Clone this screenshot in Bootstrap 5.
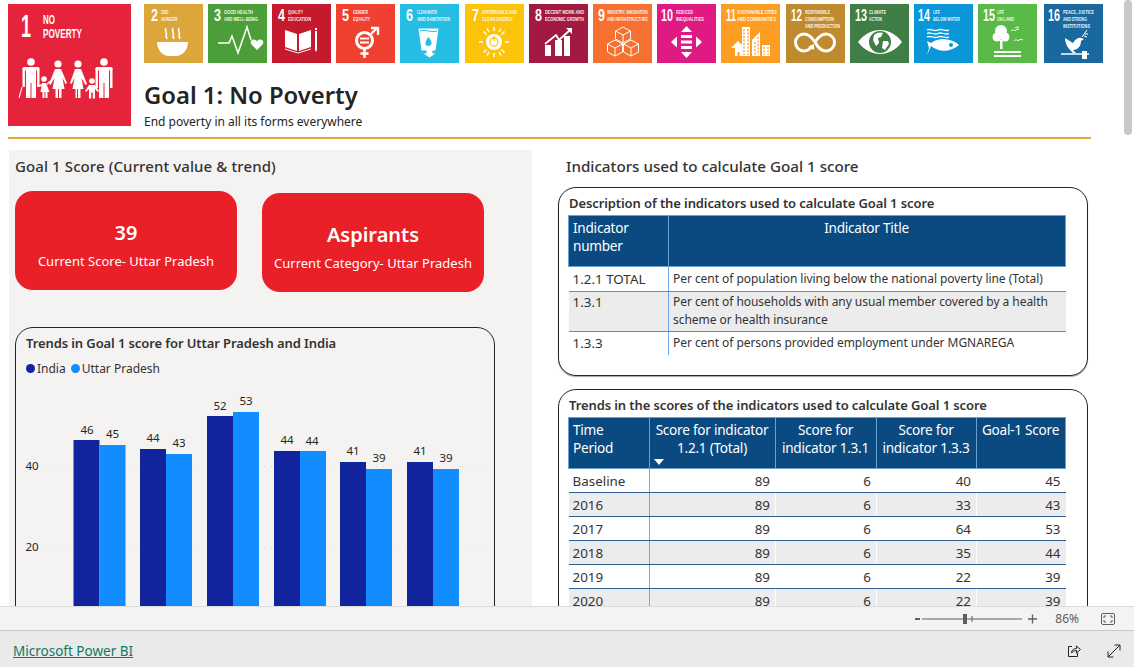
<!DOCTYPE html>
<html lang="en">

<head>
  <meta charset="UTF-8">
  <meta name="viewport" content="width=device-width, initial-scale=1.0">
  <title>Goal 1: No Poverty</title>
  <link href="https://cdn.jsdelivr.net/npm/bootstrap@5.3.2/dist/css/bootstrap.min.css" rel="stylesheet">
  <script src="https://cdn.jsdelivr.net/npm/bootstrap@5.3.2/dist/js/bootstrap.bundle.min.js"></script>
  <style>
    html, body { height: 667px; overflow: hidden; }
    body { font-family: "Noto Sans", "Liberation Sans", sans-serif; color: #252423; background: #fff; }
    .report-canvas { height: 606px; overflow: hidden; position: relative; padding: 4px 0 0 8px; }
    .page-scroll { position: absolute; left: 1124px; top: 0; width: 8px; height: 135px; background: #c8c8c8; border-radius: 4px; }

    .head-block { width: 1083px; height: 135px; border-bottom: 2px solid #e2a93f; }
    .goal-big { width: 123px; height: 122px; margin-right: 13px; flex: none; }
    .tile-row { height: 59px; }
    .tile { width: 59px; height: 59px; flex: none; margin-right: 5px; display: block; }
    .tile-gap { margin-right: 6px; }
    .tile-gap-wide { margin-right: 7px; }
    .sdg-num { font-family: "Liberation Sans Narrow", "Liberation Sans", sans-serif; font-weight: 700; fill: #fff; }
    .sdg-lbl { font-family: "Liberation Sans Narrow", "Liberation Sans", sans-serif; font-weight: 700; fill: #fff; font-size: 5.6px; opacity: .92; }
    .goal-title { font-size: 23.8px; font-weight: 600; line-height: 34px; margin: 15px 0 0; color: #252423; }
    .goal-sub { font-size: 12px; line-height: 16px; margin: 2px 0 0; color: #252423; }

    .body-cols { margin: 11px 0 0 1px; gap: 26px; }
    .score-panel { width: 523px; height: 600px; background: #f5f2f2; padding: 6px 0 0 6px; flex: none; }
    .panel-head { font-size: 15px; font-weight: 500; line-height: 20px; margin: 0; color: #333; letter-spacing: .1px; }
    .score-tile { width: 222px; height: 99px; border-radius: 18px; background: #e92027; color: #fff; padding-top: 7px; }
    .score-tile-low { margin-top: 2px; }
    .score-value { font-size: 20px; font-weight: 600; line-height: 28px; }
    .score-label { font-size: 13px; line-height: 18px; margin-top: 5px; }
    .tile-pair { margin-top: 15px; gap: 25px; align-items: flex-start; }
    .trend-box { width: 480px; height: 400px; margin-top: 35px; border: 1px solid #252423; border-radius: 18px; padding: 5px 0 0 10px; }
    .box-head { font-size: 13px; font-weight: 600; line-height: 20px; margin: 0; color: #333; letter-spacing: -.1px; }
    .legend-row { font-size: 12px; line-height: 18px; margin-top: 7px; gap: 5px; color: #333; }
    .legend-dot { width: 9px; height: 9px; border-radius: 50%; display: inline-block; margin-right: 2px; }
    .dot-india { background: #12239e; }
    .dot-state { background: #118dff; }
    .trend-svg { display: block; margin: 7px 0 0 -10px; }
    .trend-svg text { font-family: "Noto Sans", sans-serif; font-size: 11.5px; fill: #252423; letter-spacing: -.2px; }

    .indicator-col { width: 530px; flex: none; }
    .indicator-head { font-size: 15.2px; line-height: 20px; margin: 6px 0 0 8px; font-weight: 500; color: #333; }
    .table-box { border: 1px solid #252423; border-radius: 18px; padding: 5px 21px 0 9px; background: #fff; }
    .table-box .box-head { margin-left: 1px; }
    .desc-box { height: 189px; margin-top: 11px; box-shadow: 0 1px 1px rgba(0,0,0,.35); }
    .trend-table-box { height: 300px; margin-top: 13px; }
    .sdg-table { table-layout: fixed; margin: 2px 0 0; font-size: 13.4px; line-height: 18px; color: #333; }
    .sdg-table>:not(caption)>*>* { padding: 2px 5px 3px 4px; border: 0; box-shadow: none; background: transparent; color: inherit; }
    .sdg-table>thead>tr>th { background: #0a4a80; color: #fff; font-weight: 400; font-size: 13.6px; letter-spacing: -.25px; padding-top: 3px; vertical-align: top; border: 1px solid #6a9fd0; border-left-width: 0; height: 51px; }
    .sdg-table>thead>tr>th:first-child { border-left-width: 1px; }
    .sdg-table>tbody>tr>td { border-bottom: 1px solid #5f8fc0; }
    .sdg-table>tbody>tr:last-child>td { border-bottom: 0; }
    .sdg-table>tbody>tr>td:first-child { border-right: 1px solid #6aa9e9; }
    .sdg-table>tbody>tr:nth-child(even)>td { background: #ececec; }
    .desc-table>tbody>tr>td+td { font-size: 12px; letter-spacing: -.05px; }
    .desc-table>tbody>tr:nth-child(1)>td { padding-top: 3px; }
    .desc-table>tbody>tr:nth-child(2)>td { padding-top: 1px; padding-bottom: 2px; }
    .score-table>tbody>tr>td { height: 24px; padding-top: 3px; padding-bottom: 2px; border-bottom-color: #2d5f92; }
    .score-table>tbody>tr>td+td { border-left: 1px solid #fff; text-align: right; }
    .sort-mark { display: block; width: 0; height: 0; border: 5px solid transparent; border-top: 6px solid #fff; border-bottom: 0; margin: 2px 0 0 0; }

    .zoom-strip { height: 25px; background: #f3f3f3; border-top: 1px solid #dcdcdc; border-bottom: 1px solid #c8c8c8; padding-right: 19px; font-size: 12px; color: #605e5c; }
    .zoom-pct { margin: 0 22px 0 18px; }
    .foot-strip { height: 36px; background: #eaeaea; padding: 3px 13px 0; }
    .foot-link { color: #117865; font-size: 13.5px; padding-top: 1px; }
    .foot-tool { gap: 26px; }
  </style>
</head>

<body>
  <main class="report-canvas">
    <div class="page-scroll"></div>

    <div class="head-block d-flex">
      <svg class="goal-big" viewBox="0 0 123 122">
        <rect width="123" height="122" fill="#e5243b" />
        <text class="sdg-num" x="13" y="33" font-size="32" data-fit="10">1</text>
        <text class="sdg-num" x="35" y="20" font-size="12.5" data-fit="12">NO</text>
        <text class="sdg-num" x="35" y="34" font-size="12.5" data-fit="39">POVERTY</text>
        <g fill="#fff">
          <!-- man with stick -->
          <circle cx="23" cy="58" r="3.800" />
          <rect x="14.500" y="63" width="17" height="3.500" rx="1.700" />
          <rect x="14.500" y="64" width="2.400" height="19" />
          <rect x="29.100" y="64" width="2.400" height="19" />
          <rect x="18" y="64" width="10" height="15" />
          <rect x="18" y="78" width="4.500" height="16" />
          <rect x="23.500" y="78" width="4.500" height="16" />
          <path d="M13.500 83l1 .3-3 10.700-1-.3zM31 81l3 -1 1 1-3.500 2z" />
          <!-- child -->
          <circle cx="36" cy="75" r="2.800" />
          <path d="M34 79h4l3.500 9h-2v6h-2v-6h-1v6h-2v-6h-2z" />
          <path d="M39 79l3-2.500 1 1-4 3.500z" />
          <!-- woman -->
          <circle cx="50" cy="60" r="3.600" />
          <path d="M47 65h6l6 14-1.500 1-3-6 2 11h-3v9h-2.500v-9h-1v9H47.500v-9h-3l2-11-4 7-1.500-1z" />
          <!-- woman -->
          <circle cx="70" cy="60" r="3.600" />
          <path d="M67 65h6l6 15-1.500 1-4-7 2 11h-3v9h-2.500v-9h-1v9H67.500v-9h-3l2-11-3 6-1.500-1z" />
          <!-- child -->
          <circle cx="84" cy="77" r="2.800" />
          <path d="M81 81h6l4 6-1.200 1-2.800-3v9.500h-2.200v-6h-1.600v6H81v-9.500l-2.800 3-1.200-1z" />
          <!-- man -->
          <circle cx="96" cy="58" r="3.800" />
          <rect x="87.500" y="63" width="17" height="3.500" rx="1.700" />
          <rect x="87.500" y="64" width="2.400" height="20" />
          <rect x="102.100" y="64" width="2.400" height="20" />
          <rect x="91" y="64" width="10" height="15" />
          <rect x="91" y="78" width="4.500" height="16" />
          <rect x="96.500" y="78" width="4.500" height="16" />
        </g>
      </svg>

      <div class="flex-grow-1">
        <div class="tile-row d-flex">
          <svg class="tile" viewBox="0 0 59 59">
            <rect width="59" height="59" fill="#dda63a" />
            <text class="sdg-num" x="7" y="17" font-size="16" data-fit="7">2</text>
            <text class="sdg-lbl" x="17" y="10" data-fit="7.500">ZERO</text>
            <text class="sdg-lbl" x="17" y="17" data-fit="16.500">HUNGER</text>
            <path d="M13 38h31c0 7-5 14-12 14h-7c-7 0-12-7-12-14z" fill="#fff" />
            <path d="M22 24c-2 3 2 5 0 8l1 3M29 24c-2 3 2 5 0 8l1 3M35 24c-2 3 2 5 0 8l1 3" fill="none" stroke="#fff" stroke-width="1.600" />
          </svg>
          <svg class="tile" viewBox="0 0 59 59">
            <rect width="59" height="59" fill="#4c9f38" />
            <text class="sdg-num" x="6" y="17" font-size="16" data-fit="7">3</text>
            <text class="sdg-lbl" x="16" y="10" data-fit="29">GOOD HEALTH</text>
            <text class="sdg-lbl" x="16" y="17" data-fit="34">AND WELL-BEING</text>
            <path d="M10 39h11l3-7 6 17 9-26 4 13" fill="none" stroke="#fff" stroke-width="1.500" />
            <path d="M49 46l-5.500-5.500c-3-4 3-7 5.500-3 2.500-4 8.500-1 5.500 3z" fill="#fff" />
          </svg>
          <svg class="tile" viewBox="0 0 59 59">
            <rect width="59" height="59" fill="#c5192d" />
            <text class="sdg-num" x="6" y="17" font-size="16" data-fit="7">4</text>
            <text class="sdg-lbl" x="16" y="10" data-fit="15">QUALITY</text>
            <text class="sdg-lbl" x="16" y="17" data-fit="23">EDUCATION</text>
            <path d="M13 26l12 4v17l-12-4zM39 26l-12 4v17l12-4z" fill="#fff" />
            <path d="M13 45l13 4 13-4" fill="none" stroke="#fff" stroke-width="1" />
            <path d="M43 24h2v2h-2zM43 27h2v19l-1 2-1-2z" fill="#fff" />
          </svg>
          <svg class="tile" viewBox="0 0 59 59">
            <rect width="59" height="59" fill="#f04030" />
            <text class="sdg-num" x="6" y="17" font-size="16" data-fit="7">5</text>
            <text class="sdg-lbl" x="17" y="10" data-fit="15">GENDER</text>
            <text class="sdg-lbl" x="17" y="17" data-fit="17">EQUALITY</text>
            <circle cx="28.500" cy="36.500" r="8" fill="none" stroke="#fff" stroke-width="3" />
            <path d="M24 34.500h9M24 38.500h9" stroke="#fff" stroke-width="2" />
            <path d="M28.500 45v9M24.500 49.500h8M34 31l7-7M35 24h7v7" fill="none" stroke="#fff" stroke-width="2.400" />
          </svg>
          <svg class="tile tile-gap" viewBox="0 0 59 59">
            <rect width="59" height="59" fill="#26bde2" />
            <text class="sdg-num" x="6" y="17" font-size="16" data-fit="7">6</text>
            <text class="sdg-lbl" x="17" y="10" data-fit="20">CLEAN WATER</text>
            <text class="sdg-lbl" x="17" y="17" data-fit="33">AND SANITATION</text>
            <path d="M18.500 24.500h20l-3 22h-3v3h3l-6 4-6-4h3v-3h-5z" fill="#fff" />
            <path d="M20 27c5-2 12 2 17 0" fill="none" stroke="#26bde2" stroke-width="1" />
            <path d="M28.500 33c-5 6-3 9 0 9s5-3 0-9z" fill="#26bde2" />
          </svg>
          <svg class="tile" viewBox="0 0 59 59">
            <rect width="59" height="59" fill="#fcc30b" />
            <text class="sdg-num" x="7" y="17" font-size="16" data-fit="7">7</text>
            <text class="sdg-lbl" x="17" y="10" data-fit="35">AFFORDABLE AND</text>
            <text class="sdg-lbl" x="17" y="17" data-fit="31">CLEAN ENERGY</text>
            <circle cx="29" cy="38" r="8" fill="#fff" />
            <circle cx="29" cy="38" r="4" fill="none" stroke="#fcc30b" stroke-width="1.300" />
            <path d="M29 32v5" stroke="#fcc30b" stroke-width="1.300" />
            <path d="M29 23v4M29 49v4M14 38h4M40 38h4M18.500 27.500l3 3M36.500 45.500l3 3M18.500 48.500l3-3M36.500 30.500l3-3M22 24.500l2 3.500M34 48l2 3.500M36 24.500l-2 3.500M24 48l-2 3.500" stroke="#fff" stroke-width="1.500" />
          </svg>
          <svg class="tile" viewBox="0 0 59 59">
            <rect width="59" height="59" fill="#a21942" />
            <text class="sdg-num" x="6" y="17" font-size="16" data-fit="7">8</text>
            <text class="sdg-lbl" x="16" y="10" data-fit="39">DECENT WORK AND</text>
            <text class="sdg-lbl" x="16" y="17" data-fit="39">ECONOMIC GROWTH</text>
            <path d="M16 41h6v11h-6zM26 36h7v16h-7zM35 32h6v20h-6z" fill="#fff" />
            <path d="M16 40l11-9 3 5 11-10" fill="none" stroke="#fff" stroke-width="1.800" />
            <path d="M37 24h6v6z" fill="#fff" />
          </svg>
          <svg class="tile" viewBox="0 0 59 59">
            <rect width="59" height="59" fill="#f6702f" />
            <text class="sdg-num" x="5" y="17" font-size="16" data-fit="7">9</text>
            <text class="sdg-lbl" x="14" y="10" data-fit="41">INDUSTRY, INNOVATION</text>
            <text class="sdg-lbl" x="14" y="17" data-fit="41">AND INFRASTRUCTURE</text>
            <g fill="none" stroke="#fff" stroke-width="1">
              <path d="M30 23l7.500 4v8l-7.500 4-7.500-4v-8zM22.500 27l7.500 4 7.500-4M30 31v8" />
              <path d="M22 36l7.500 4v8l-7.500 4-7.500-4v-8zM14.500 40l7.500 4 7.500-4M22 44v8" />
              <path d="M38 36l7.500 4v8l-7.500 4-7.500-4v-8zM30.500 40l7.500 4 7.500-4M38 44v8" />
            </g>
          </svg>
          <svg class="tile" viewBox="0 0 59 59">
            <rect width="59" height="59" fill="#e01a83" />
            <text class="sdg-num" x="4" y="17" font-size="16" data-fit="12">10</text>
            <text class="sdg-lbl" x="19" y="10" data-fit="17">REDUCED</text>
            <text class="sdg-lbl" x="19" y="17" data-fit="28">INEQUALITIES</text>
            <path d="M29.500 22l5.500 6h-11zM29.500 54l5.500-6h-11zM14 38l6-5.500v11zM45 38l-6-5.500v11zM24 31h11v3h-11zM24 36.500h11v3h-11zM24 42h11v3h-11z" fill="#fff" />
          </svg>
          <svg class="tile tile-gap" viewBox="0 0 59 59">
            <rect width="59" height="59" fill="#fd9d24" />
            <text class="sdg-num" x="5" y="17" font-size="16" data-fit="10">11</text>
            <text class="sdg-lbl" x="16" y="10" data-fit="40">SUSTAINABLE CITIES</text>
            <text class="sdg-lbl" x="16" y="17" data-fit="39">AND COMMUNITIES</text>
            <path d="M14 52V44h-4l7-7 7 7h-3v8h-2.500v-4h-2v4zM21 23h8v29h-8zM31 52V36l8-8v24zM41 41h8v11h-8z" fill="#fff" />
            <path d="M23 25v26M27 25v26M34 38v13M37 33v18M43 43v8M47 43v8" stroke="#fd9d24" stroke-width="1.300" stroke-dasharray="2 1.500" />
          </svg>
          <svg class="tile" viewBox="0 0 59 59">
            <rect width="59" height="59" fill="#bf8b2e" />
            <text class="sdg-num" x="5" y="17" font-size="16" data-fit="11">12</text>
            <text class="sdg-lbl" x="19" y="10" data-fit="25">RESPONSIBLE</text>
            <text class="sdg-lbl" x="19" y="17" data-fit="29">CONSUMPTION</text>
            <text class="sdg-lbl" x="19" y="24" data-fit="35">AND PRODUCTION</text>
            <path d="M29 38c-4-6-8-8-11-8a8.500 8.500 0 0 0 0 17c3 0 6-2 8-5M29 38c4-6 8-8 11-8a8.500 8.500 0 0 1 0 17c-4 0-8-3-11-9" fill="none" stroke="#fff" stroke-width="3" />
            <path d="M22 43l6-3 0 6z" fill="#fff" />
          </svg>
          <svg class="tile" viewBox="0 0 59 59">
            <rect width="59" height="59" fill="#3f7e44" />
            <text class="sdg-num" x="5" y="17" font-size="16" data-fit="12">13</text>
            <text class="sdg-lbl" x="19" y="10" data-fit="17">CLIMATE</text>
            <text class="sdg-lbl" x="19" y="17" data-fit="13">ACTION</text>
            <path d="M8 38c12-16 32-16 44 0-12 16-32 16-44 0z" fill="#fff" />
            <circle cx="30" cy="38" r="11" fill="#3f7e44" />
            <path d="M24 31c3-3 7-3 9-2l-2 4-3 1 1 5-3 3-3-6zM33 37l5 0 1 3-4 6-3-2z" fill="#fff" />
          </svg>
          <svg class="tile" viewBox="0 0 59 59">
            <rect width="59" height="59" fill="#0a97d9" />
            <text class="sdg-num" x="4" y="17" font-size="16" data-fit="12">14</text>
            <text class="sdg-lbl" x="19" y="10" data-fit="7">LIFE</text>
            <text class="sdg-lbl" x="19" y="17" data-fit="27">BELOW WATER</text>
            <path d="M13 26c4-2 7 2 11 0s7 2 11 0M13 29.500c4-2 7 2 11 0s7 2 11 0M13 33c4-2 7 2 11 0s7 2 11 0" fill="none" stroke="#fff" stroke-width="1.300" />
            <path d="M13 37l4 2c8-6 20-5 28 2-8 7-20 8-28 1l-4 9 2-7z" fill="#fff" />
            <circle cx="37" cy="41" r="2" fill="#0a97d9" />
          </svg>
          <svg class="tile tile-gap-wide" viewBox="0 0 59 59">
            <rect width="59" height="59" fill="#5aba47" />
            <text class="sdg-num" x="5" y="17" font-size="16" data-fit="12">15</text>
            <text class="sdg-lbl" x="19" y="10" data-fit="7">LIFE</text>
            <text class="sdg-lbl" x="19" y="17" data-fit="17">ON LAND</text>
            <circle cx="23" cy="27" r="6" fill="#fff" />
            <circle cx="19" cy="33" r="4.500" fill="#fff" />
            <circle cx="27" cy="33" r="4.500" fill="#fff" />
            <path d="M22 36h2.500v9H22z" fill="#fff" />
            <path d="M16 48h27M16 52h27" stroke="#fff" stroke-width="1.800" />
            <path d="M33 27c2-2 3-1 4 0 1-2 3-2 4-2M37 24c1-1 3-1 4-1M36 37c2-2 3-1 4 0 1-2 3-2 5-1" fill="none" stroke="#fff" stroke-width="1" />
          </svg>
          <svg class="tile" viewBox="0 0 59 59">
            <rect width="59" height="59" fill="#19689f" />
            <text class="sdg-num" x="4" y="17" font-size="16" data-fit="12">16</text>
            <text class="sdg-lbl" x="19" y="10" data-fit="31">PEACE, JUSTICE</text>
            <text class="sdg-lbl" x="19" y="17" data-fit="24">AND STRONG</text>
            <text class="sdg-lbl" x="19" y="24" data-fit="27">INSTITUTIONS</text>
            <path d="M21 34l8 5c2-4 6-6 8-5l3 1-3 2c0 6-4 9-8 9l3 3h-3l-3-3c-3-3-5-8-5-12z" fill="#fff" />
            <path d="M38 33l5-7M41 30l3 0M40 32l3 1" stroke="#fff" stroke-width="1" fill="none" />
            <path d="M17 50h28" stroke="#fff" stroke-width="1.500" />
            <path d="M38 47h5v8h-5z" fill="#fff" />
          </svg>
        </div>
        <h1 class="goal-title">Goal 1: No Poverty</h1>
        <p class="goal-sub">End poverty in all its forms everywhere</p>
      </div>
    </div>

    <div class="body-cols d-flex">
      <section class="score-panel">
        <h2 class="panel-head">Goal 1 Score (Current value &amp; trend)</h2>
        <div class="tile-pair d-flex">
          <div class="score-tile d-flex flex-column align-items-center justify-content-center">
            <div class="score-value">39</div>
            <div class="score-label">Current Score- Uttar Pradesh</div>
          </div>
          <div class="score-tile score-tile-low d-flex flex-column align-items-center justify-content-center">
            <div class="score-value">Aspirants</div>
            <div class="score-label">Current Category- Uttar Pradesh</div>
          </div>
        </div>
        <div class="trend-box">
          <h3 class="box-head">Trends in Goal 1 score for Uttar Pradesh and India</h3>
          <div class="legend-row d-flex align-items-center">
            <span><i class="legend-dot dot-india"></i>India</span>
            <span><i class="legend-dot dot-state"></i>Uttar Pradesh</span>
          </div>
          <svg class="trend-svg" width="478" height="240" viewBox="16 385 478 240">
            <g stroke="#d9d6d6" stroke-dasharray="1 6">
              <path d="M47 466.500H484M47 547.500H484" />
            </g>
            <text x="32" y="470" text-anchor="middle">40</text>
            <text x="32" y="551" text-anchor="middle">20</text>
            <g fill="#12239e">
              <rect x="73.500" y="440" width="26" height="190" />
              <rect x="140" y="449" width="26" height="181" />
              <rect x="207" y="416" width="26" height="214" />
              <rect x="274" y="451" width="26" height="179" />
              <rect x="340" y="462" width="26" height="168" />
              <rect x="407" y="462" width="26" height="168" />
            </g>
            <g fill="#118dff">
              <rect x="99.500" y="445" width="26" height="185" />
              <rect x="166" y="454" width="26" height="176" />
              <rect x="233" y="412" width="26" height="218" />
              <rect x="300" y="451" width="26" height="179" />
              <rect x="366" y="469" width="26" height="161" />
              <rect x="433" y="469" width="26" height="161" />
            </g>
            <g text-anchor="middle">
              <text x="87" y="434">46</text>
              <text x="112.500" y="438">45</text>
              <text x="153" y="442">44</text>
              <text x="179" y="447">43</text>
              <text x="220" y="410">52</text>
              <text x="246" y="405">53</text>
              <text x="287" y="444">44</text>
              <text x="312" y="445">44</text>
              <text x="353" y="455">41</text>
              <text x="379" y="462">39</text>
              <text x="420" y="455">41</text>
              <text x="446" y="462">39</text>
            </g>
          </svg>
        </div>
      </section>

      <section class="indicator-col">
        <h2 class="indicator-head">Indicators used to calculate Goal 1 score</h2>
        <div class="table-box desc-box">
          <h3 class="box-head">Description of the indicators used to calculate Goal 1 score</h3>
          <table class="table sdg-table desc-table">
            <colgroup>
              <col style="width:100px">
              <col>
            </colgroup>
            <thead>
              <tr>
                <th>Indicator number</th>
                <th class="text-center">Indicator Title</th>
              </tr>
            </thead>
            <tbody>
              <tr>
                <td>1.2.1 TOTAL</td>
                <td>Per cent of population living below the national poverty line (Total)</td>
              </tr>
              <tr>
                <td>1.3.1</td>
                <td>Per cent of households with any usual member covered by a health scheme or health insurance</td>
              </tr>
              <tr>
                <td>1.3.3</td>
                <td>Per cent of persons provided employment under MGNAREGA</td>
              </tr>
            </tbody>
          </table>
        </div>
        <div class="table-box trend-table-box">
          <h3 class="box-head">Trends in the scores of the indicators used to calculate Goal 1 score</h3>
          <table class="table sdg-table score-table">
            <colgroup>
              <col style="width:81px">
              <col style="width:126px">
              <col style="width:101px">
              <col style="width:100px">
              <col>
            </colgroup>
            <thead>
              <tr>
                <th>Time Period</th>
                <th class="text-center">Score for indicator 1.2.1 (Total)<span class="sort-mark"></span></th>
                <th class="text-center">Score for indicator 1.3.1</th>
                <th class="text-center">Score for indicator 1.3.3</th>
                <th class="text-center">Goal-1 Score</th>
              </tr>
            </thead>
            <tbody>
              <tr><td>Baseline</td><td>89</td><td>6</td><td>40</td><td>45</td></tr>
              <tr><td>2016</td><td>89</td><td>6</td><td>33</td><td>43</td></tr>
              <tr><td>2017</td><td>89</td><td>6</td><td>64</td><td>53</td></tr>
              <tr><td>2018</td><td>89</td><td>6</td><td>35</td><td>44</td></tr>
              <tr><td>2019</td><td>89</td><td>6</td><td>22</td><td>39</td></tr>
              <tr><td>2020</td><td>89</td><td>6</td><td>22</td><td>39</td></tr>
            </tbody>
          </table>
        </div>
      </section>
    </div>
  </main>

  <div class="zoom-strip d-flex align-items-center justify-content-end">
    <svg width="122" height="16" viewBox="0 0 122 16">
      <path d="M0 8h5" stroke="#605e5c" stroke-width="2" />
      <path d="M7 8h100" stroke="#605e5c" />
      <rect x="48" y="3" width="4" height="10" fill="#605e5c" />
      <path d="M57 5v6" stroke="#605e5c" />
      <path d="M113 8h9M117.500 3.500v9" stroke="#605e5c" stroke-width="1.300" />
    </svg>
    <span class="zoom-pct">86%</span>
    <svg width="14" height="12" viewBox="0 0 14 12" fill="none" stroke="#605e5c">
      <rect x=".5" y=".5" width="13" height="11" rx="1.500" />
      <path d="M3 5V3h2M9 3h2v2M3 7v2h2M9 9h2V7" />
    </svg>
  </div>
  <footer class="foot-strip d-flex align-items-center justify-content-between">
    <a class="foot-link" href="#">Microsoft Power BI</a>
    <div class="foot-tool d-flex align-items-center">
      <svg width="14" height="14" viewBox="0 0 14 14" fill="none" stroke="#252423">
        <path d="M5 2.500H1.500v10h9V9" />
        <path d="M4.500 9c0-3 2.500-4.500 5-4.500V2l4 3.500-4 3.500V6.500c-2 0-4 1-5 2.500z" />
      </svg>
      <svg width="14" height="14" viewBox="0 0 14 14" fill="none" stroke="#252423">
        <path d="M1 13L13 1M7.500 1H13v5.500M1 7.500V13h5.500" />
      </svg>
    </div>
  </footer>

  <script>
    // squeeze the SDG tile labels to the width they have on the real tiles
    document.querySelectorAll('text[data-fit]').forEach(function (t) {
      var x = t.getAttribute('x');
      var y = t.getAttribute('y');
      var s = parseFloat(t.dataset.fit) / t.getComputedTextLength();
      t.setAttribute('transform', 'translate(' + x + ' ' + y + ') scale(' + s + ' 1) translate(' + (-x) + ' ' + (-y) + ')');
    });
  </script>
</body>

</html>
